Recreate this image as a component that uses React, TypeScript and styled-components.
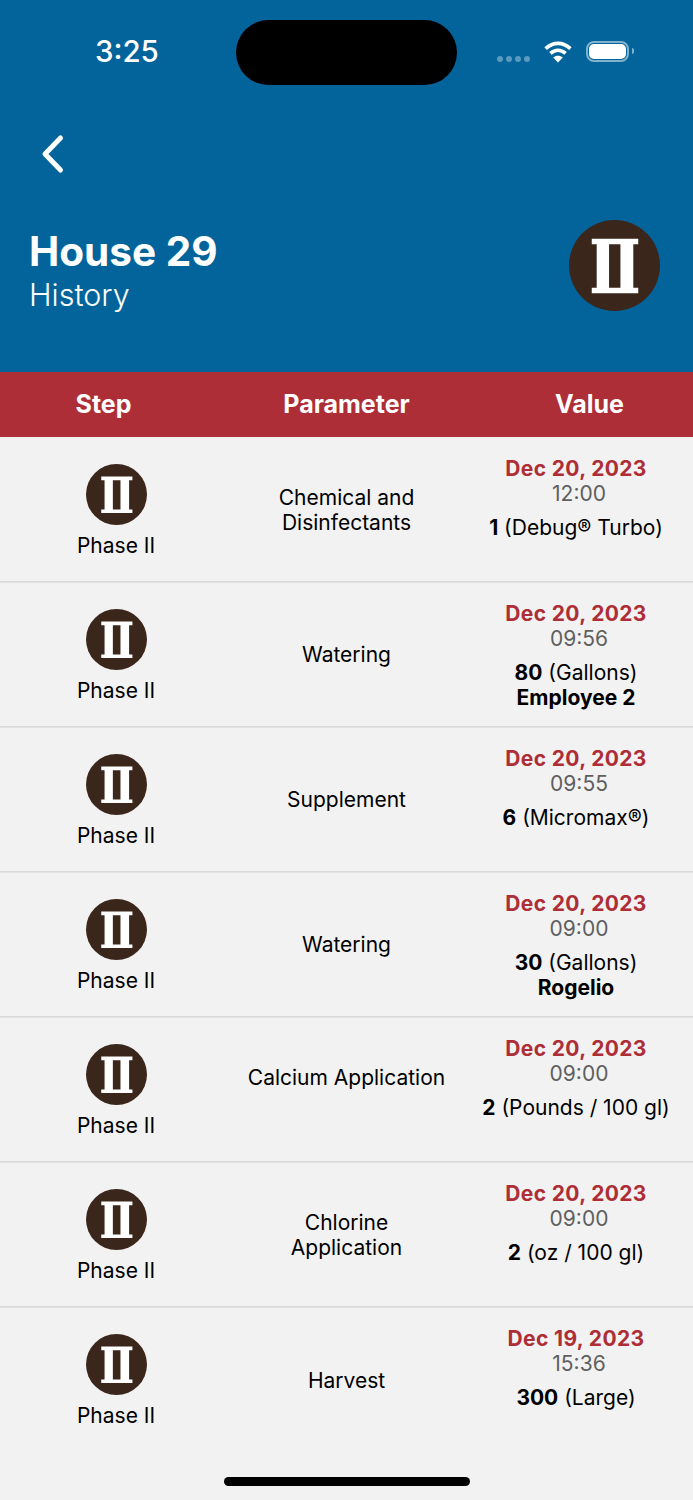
import styled, { createGlobalStyle } from "styled-components";

type HistoryItem = {
  parameter: string[];
  date: string;
  time: string;
  amount: string;
  unit: string;
  employee?: string;
};

const historyItems: HistoryItem[] = [
  { parameter: ["Chemical and", "Disinfectants"], date: "Dec 20, 2023", time: "12:00", amount: "1", unit: "(Debug® Turbo)" },
  { parameter: ["Watering"], date: "Dec 20, 2023", time: "09:56", amount: "80", unit: "(Gallons)", employee: "Employee 2" },
  { parameter: ["Supplement"], date: "Dec 20, 2023", time: "09:55", amount: "6", unit: "(Micromax®)" },
  { parameter: ["Watering"], date: "Dec 20, 2023", time: "09:00", amount: "30", unit: "(Gallons)", employee: "Rogelio" },
  { parameter: ["Calcium Application", "\u00a0"], date: "Dec 20, 2023", time: "09:00", amount: "2", unit: "(Pounds / 100 gl)" },
  { parameter: ["Chlorine", "Application"], date: "Dec 20, 2023", time: "09:00", amount: "2", unit: "(oz / 100 gl)" },
  { parameter: ["Harvest"], date: "Dec 19, 2023", time: "15:36", amount: "300", unit: "(Large)" },
];

function PhaseBadge({ size }: { size: number }) {
  return (
    <svg width={size} height={size} viewBox="0 0 92 92" aria-hidden="true">
      <circle cx="46" cy="46" r="46" fill="#3a261a" />
      <path
        fill="#fff"
        d="M23 19H70V24.500H65V68.500H70V74H23V68.500H28V24.500H23ZM40.500 24.500V68.500H52V24.500Z"
        fillRule="evenodd"
      />
    </svg>
  );
}

export default function App() {
  return (
    <Screen>
      <GlobalStyle />
      <Header>
        <StatusBar>
          <Clock>3:25</Clock>
          <Island />
          <StatusIcons>
            <SignalDots>
              <Dot />
              <Dot />
              <Dot />
              <Dot />
            </SignalDots>
            <svg width="28" height="22" viewBox="0 0 28 22" aria-hidden="true">
              <path
                fill="none"
                stroke="#fff"
                strokeWidth="3.6"
                d="M1.6 7.6C9 .6 19 .6 26.4 7.6M6.4 12.4C11 8.3 17 8.3 21.6 12.4"
              />
              <path fill="#fff" d="M14 21.5 9.2 16.4C12 14.2 16 14.2 18.8 16.4Z" />
            </svg>
            <Battery>
              <BatteryFill />
            </Battery>
          </StatusIcons>
        </StatusBar>
        <BackButton>
          <svg width="24" height="40" viewBox="0 0 24 40" aria-hidden="true">
            <polyline
              points="19.500,4 4,20 19.500,36"
              fill="none"
              stroke="#fff"
              strokeWidth="5"
              strokeLinecap="round"
              strokeLinejoin="round"
            />
          </svg>
        </BackButton>
        <TitleRow>
          <div>
            <Title>House 29</Title>
            <Subtitle>History</Subtitle>
          </div>
          <PhaseBadge size={91} />
        </TitleRow>
      </Header>
      <TableHead>
        <HeadCell $shift={-12}>Step</HeadCell>
        <HeadCell $shift={0}>Parameter</HeadCell>
        <HeadCell $shift={12}>Value</HeadCell>
      </TableHead>
      <HistoryList>
        {historyItems.map((item, i) => (
          <Row key={i}>
            <StepCell>
              <PhaseBadge size={61} />
              <StepLabel>Phase II</StepLabel>
            </StepCell>
            <ParameterCell>
              {item.parameter.map((line) => (
                <div key={line}>{line}</div>
              ))}
            </ParameterCell>
            <ValueCell>
              <DateText>{item.date}</DateText>
              <TimeText>{item.time}</TimeText>
              <Amount>
                <b>{item.amount}</b> {item.unit}
              </Amount>
              {item.employee && <Employee>{item.employee}</Employee>}
            </ValueCell>
          </Row>
        ))}
      </HistoryList>
      <HomeIndicator />
    </Screen>
  );
}

const GlobalStyle = createGlobalStyle`
  html, body {
    margin: 0;
    padding: 0;
    background: #f2f2f2;
  }
  body {
    font-family: Inter, "Liberation Sans", sans-serif;
  }
`;

const Screen = styled.div`
  position: relative;
  width: 693px;
  height: 1500px;
  overflow: hidden;
  background: #f2f2f2;
  color: #000;
`;

const Header = styled.header`
  height: 372px;
  background: #02649b;
  color: #fff;
`;

const StatusBar = styled.div`
  display: flex;
  align-items: center;
  height: 65px;
  padding-top: 20px;
`;

const Clock = styled.div`
  width: 141px;
  margin: 0 0 2px 95px;
  font-size: 29.5px;
  font-weight: 500;
  line-height: 1;
`;

const Island = styled.div`
  width: 221px;
  height: 65px;
  border-radius: 33px;
  background: #000;
`;

const StatusIcons = styled.div`
  display: flex;
  align-items: center;
  margin-left: 40px;
  padding-bottom: 2px;
`;

const SignalDots = styled.div`
  display: flex;
  gap: 3px;
  margin: 15px 14px 0 0;
`;

const Dot = styled.span`
  width: 6px;
  height: 6px;
  border-radius: 50%;
  background: rgba(255, 255, 255, 0.35);
`;

const Battery = styled.div`
  position: relative;
  box-sizing: border-box;
  width: 43px;
  height: 21px;
  margin-left: 14px;
  padding: 1px;
  border: 2px solid rgba(255, 255, 255, 0.5);
  border-radius: 8px;

  &::after {
    content: "";
    position: absolute;
    top: 5px;
    right: -7px;
    width: 2px;
    height: 6px;
    border-radius: 0 3px 3px 0;
    background: rgba(255, 255, 255, 0.5);
  }
`;

const BatteryFill = styled.div`
  height: 100%;
  border-radius: 5px;
  background: #fff;
`;

const BackButton = styled.div`
  display: flex;
  height: 40px;
  margin-top: 49px;
  padding-left: 41px;
`;

const TitleRow = styled.div`
  display: flex;
  align-items: flex-start;
  justify-content: space-between;
  margin-top: 46px;
  padding: 0 33px 0 29px;
`;

const Title = styled.h1`
  margin: 9px 0 0;
  font-size: 40.5px;
  font-weight: 700;
  line-height: 46px;
`;

const Subtitle = styled.div`
  font-size: 30.5px;
  font-weight: 300;
  line-height: 39px;
`;

const TableHead = styled.div`
  display: grid;
  grid-template-columns: repeat(3, 231px);
  align-items: center;
  box-sizing: border-box;
  height: 65px;
  padding-bottom: 2px;
  background: #ae2e37;
  color: #fff;
`;

const HeadCell = styled.div<{ $shift: number }>`
  text-align: center;
  font-size: 25px;
  font-weight: 700;
  transform: translateX(${(props) => props.$shift}px);
`;

const HistoryList = styled.ul`
  margin: 0;
  padding: 0;
  list-style: none;
`;

const Row = styled.li`
  display: grid;
  grid-template-columns: repeat(3, 231px);
  box-sizing: border-box;
  height: 145px;
  border-bottom: 1px solid #dadada;
  box-shadow: 0 1px 0 #e2e2e2;
  font-size: 21px;

  &:last-child {
    border-bottom: 0;
    box-shadow: none;
  }
`;

const StepCell = styled.div`
  display: flex;
  flex-direction: column;
  align-items: center;
  padding: 27px 0 0 1px;
`;

const StepLabel = styled.div`
  margin-top: 8px;
  line-height: 26px;
`;

const ParameterCell = styled.div`
  display: flex;
  flex-direction: column;
  justify-content: center;
  padding-top: 1px;
  text-align: center;
  line-height: 25px;
`;

const ValueCell = styled.div`
  padding: 18px 3px 0 0;
  text-align: center;
  line-height: 25px;
`;

const DateText = styled.div`
  padding-top: 1px;
  color: #ae2e37;
  font-weight: 700;
  letter-spacing: 0.35px;
`;

const TimeText = styled.div`
  padding-left: 6px;
  color: #5f5f5f;
`;

const Amount = styled.div`
  margin-top: 9px;
  white-space: nowrap;

  b {
    font-weight: 700;
  }
`;

const Employee = styled.div`
  font-weight: 700;
`;

const HomeIndicator = styled.div`
  position: absolute;
  left: 224px;
  bottom: 14px;
  width: 246px;
  height: 9px;
  border-radius: 5px;
  background: #000;
`;
